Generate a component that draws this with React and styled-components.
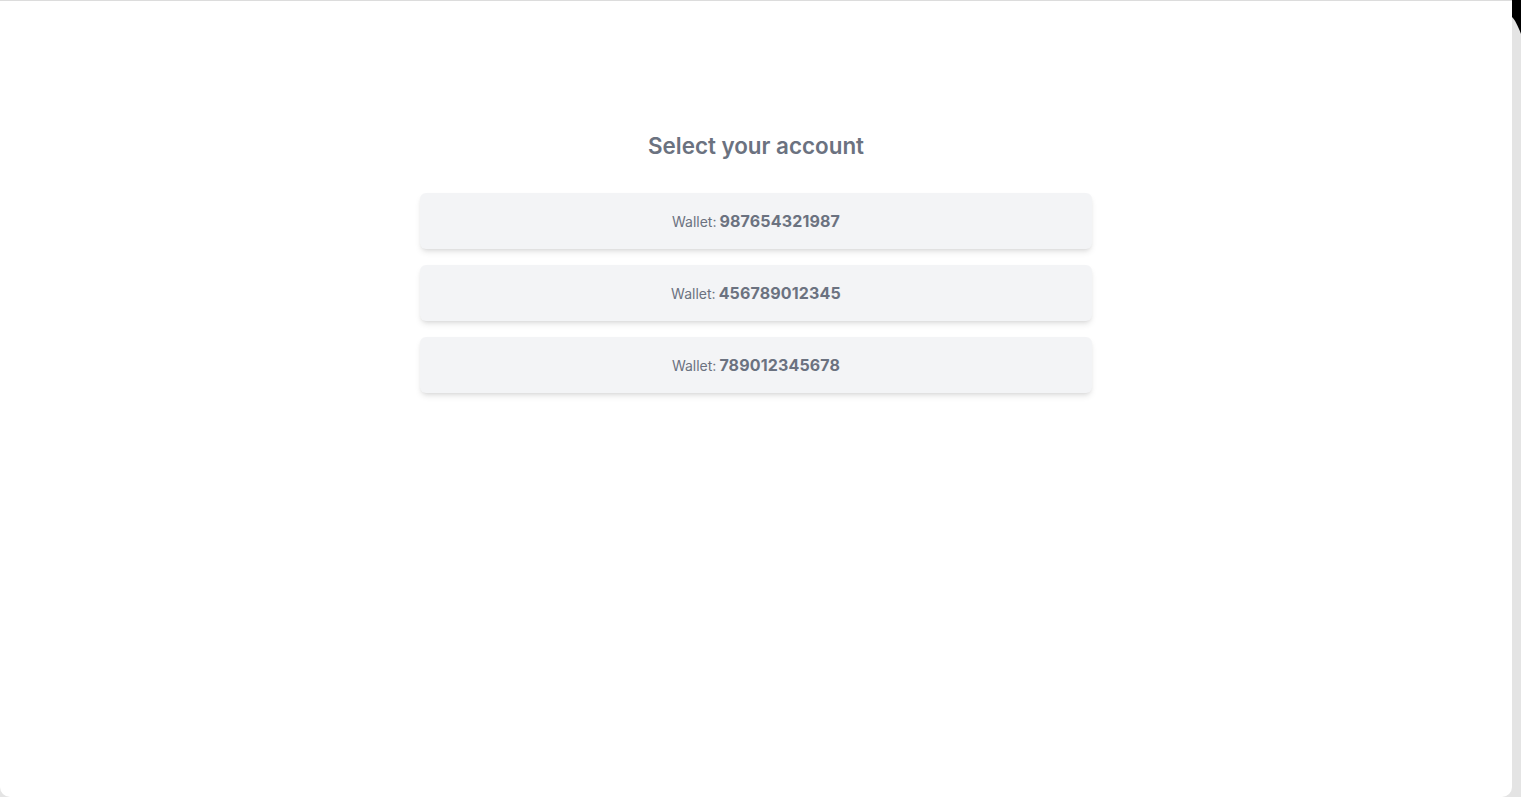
import React from "react";
import styled, { createGlobalStyle } from "styled-components";

const Global = createGlobalStyle`
  html, body { margin: 0; padding: 0; height: 100%; }
  body {
    background: #e4e4e4;
    font-family: Inter, "Noto Sans", "Liberation Sans", sans-serif;
    overflow: hidden;
  }
  #root { height: 100%; }
`;

const Shell = styled.div`
  display: flex;
  height: 797px;
  width: 1521px;
`;

const Panel = styled.main`
  width: 1512px;
  height: 797px;
  box-sizing: border-box;
  background: #ffffff;
  border-top: 1px solid #dcdcdc;
  border-bottom-left-radius: 10px;
  border-bottom-right-radius: 10px;
  display: flex;
  flex-direction: column;
  align-items: center;
  padding-top: 129px;
`;

const Strip = styled.div`
  flex: 1;
  background: #e4e4e4;
  position: relative;
  overflow: hidden;
`;

const StripCap = styled.svg`
  position: absolute;
  top: 0;
  left: 0;
  display: block;
`;

const Title = styled.h1`
  margin: 0 0 31px;
  font-size: 22.4px;
  line-height: 32px;
  font-weight: 600;
  color: #6b7280;
`;

const List = styled.div`
  width: 672px;
  display: flex;
  flex-direction: column;
  gap: 16px;
`;

const Card = styled.button`
  all: unset;
  box-sizing: border-box;
  height: 56px;
  width: 100%;
  background: #f3f4f6;
  border-radius: 6px;
  box-shadow: 0 4px 6px -1px rgba(0, 0, 0, 0.1), 0 2px 4px -2px rgba(0, 0, 0, 0.1);
  display: flex;
  align-items: center;
  justify-content: center;
  gap: 3px;
  cursor: pointer;
  font-family: Inter, "Noto Sans", "Liberation Sans", sans-serif;
`;

const Label = styled.span`
  font-size: 14px;
  color: #6b7280;
`;

const Number = styled.span`
  font-size: 16px;
  font-weight: 700;
  letter-spacing: 0.15px;
  color: #6b7280;
`;

const wallets = ["987654321987", "456789012345", "789012345678"];

export default function App() {
  return (
    <>
      <Global />
      <Shell>
        <Panel>
          <Title>Select your account</Title>
          <List>
            {wallets.map((w) => (
              <Card key={w}>
                <Label>Wallet:</Label>
                <Number>{w}</Number>
              </Card>
            ))}
          </List>
        </Panel>
        <Strip>
          <StripCap width="9" height="36" viewBox="0 0 9 36">
            <path d="M0 0 H9 V34 C6 26 3 20 0 17 Z" fill="#000" />
          </StripCap>
        </Strip>
      </Shell>
    </>
  );
}
